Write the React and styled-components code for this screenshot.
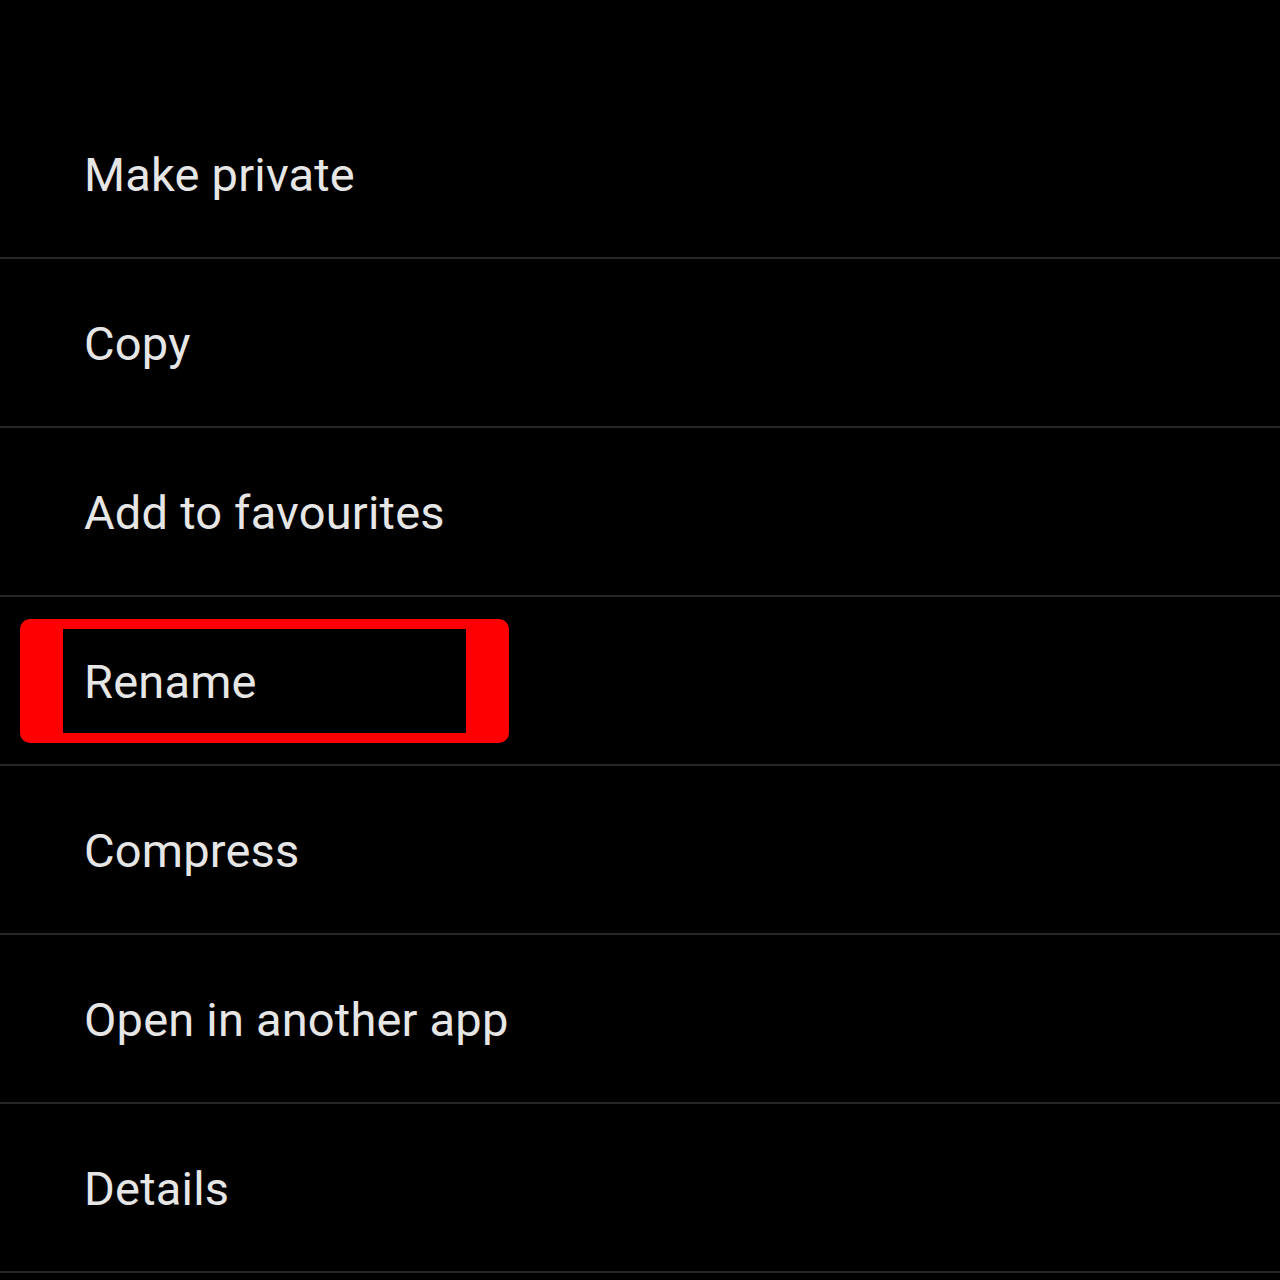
import React from 'react'
import styled, { createGlobalStyle } from 'styled-components'

const GlobalStyle = createGlobalStyle`
  html, body {
    margin: 0;
    padding: 0;
    background: #000;
  }
  body {
    font-family: Roboto, "Noto Sans", sans-serif;
  }
`

const items = [
  'Make private',
  'Copy',
  'Add to favourites',
  'Rename',
  'Compress',
  'Open in another app',
  'Details',
]

function App() {
  return (
    <>
      <GlobalStyle />
      <Screen>
        <Menu>
          {items.map(label => (
            <Row key={label}>
              <Label>{label}</Label>
              {label === 'Rename' && <Highlight />}
            </Row>
          ))}
        </Menu>
      </Screen>
    </>
  )
}

export default App

// styled components
const Screen = styled.div`
  width: 1280px;
  height: 1280px;
  background: #000;
  overflow: hidden;
  padding-top: 90px;
  box-sizing: border-box;
`

const Menu = styled.ul`
  list-style: none;
  margin: 0;
  padding: 0;
`

const Row = styled.li`
  position: relative;
  height: 167px;
  border-bottom: 2px solid #262626;
  display: flex;
  align-items: center;
  padding-left: 84px;
`

const Label = styled.span`
  position: relative;
  z-index: 1;
  top: 1px;
  color: #e6e6e6;
  font-size: 47px;
  line-height: 1;
  letter-spacing: 0.2px;
`

const Highlight = styled.div`
  position: absolute;
  left: 20px;
  top: 22px;
  width: 489px;
  height: 124px;
  box-sizing: border-box;
  border-style: solid;
  border-color: #ff0000;
  border-width: 10px 43px;
  border-radius: 10px;
`
